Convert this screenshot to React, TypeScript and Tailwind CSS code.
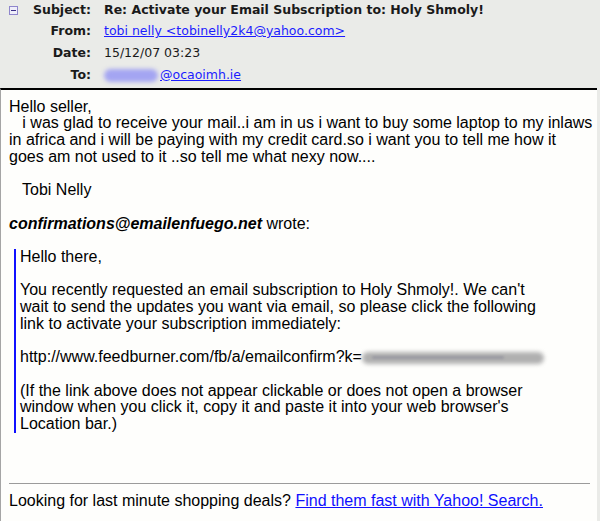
import React from "react";

const headerFont = { fontFamily: '"DejaVu Sans", Verdana, sans-serif' };

function CollapseIcon() {
  return (
    <span className="flex h-[9px] w-[9px] items-center justify-center border border-[#8f86cc] bg-[#efeefa]">
      <span className="block h-px w-[5px] bg-[#3b2f86]" />
    </span>
  );
}

function HeaderRow({ label, children, icon }: { label: string; children: React.ReactNode; icon?: boolean }) {
  return (
    <>
      <div className="flex h-[18px] items-center pl-[9px]">
        {icon && <CollapseIcon />}
        <span className="ml-auto font-bold text-[#1a1a1a]">{label}</span>
      </div>
      <div className="flex h-[18px] items-center whitespace-nowrap">{children}</div>
    </>
  );
}

export default function App() {
  return (
    <div className="flex h-[521px] w-[600px] flex-col overflow-hidden bg-[#eaebe8]">
      {/* message header */}
      <div
        className="grid grid-cols-[91px_1fr] gap-x-[13px] gap-y-[3.7px] pb-[3.7px] pt-[1px] text-[12.5px] text-[#1a1a1a]"
        style={headerFont}
      >
        <HeaderRow label="Subject:" icon>
          <span className="font-bold">Re: Activate your Email Subscription to: Holy Shmoly!</span>
        </HeaderRow>
        <HeaderRow label="From:">
          <a className="text-[#1c1cff] underline">tobi nelly &lt;tobinelly2k4@yahoo.com&gt;</a>
        </HeaderRow>
        <HeaderRow label="Date:">
          <span>15/12/07 03:23</span>
        </HeaderRow>
        <HeaderRow label="To:">
          <span className="inline-block h-[13px] w-[54px] rounded-full bg-[#a4a5f2] blur-[2px]" />
          <a className="ml-[2px] text-[#1c1cff] underline">@ocaoimh.ie</a>
        </HeaderRow>
      </div>

      {/* message body */}
      <div
        className="flex-1 w-[597px] border-l border-t-2 border-l-[#a5a5a5] border-t-black bg-[#fefefc] pl-[8px] pr-[7px] pt-[9px] text-[16px] leading-[16.7px] text-black"
        style={{ fontFamily: '"Liberation Sans", Arial, Helvetica, sans-serif' }}
      >
        <div className="whitespace-pre">
          {"Hello seller,\n   i was glad to receive your mail..i am in us i want to buy some laptop to my inlaws\nin africa and i will be paying with my credit card.so i want you to tell me how it\ngoes am not used to it ..so tell me what nexy now....\n\n   Tobi Nelly\n\n"}
          <b>
            <i>confirmations@emailenfuego.net</i>
          </b>
          {" wrote:\n "}
        </div>

        <blockquote className="ml-[5px] whitespace-pre border-l-2 border-[#1010ff] pl-[4px]">
          {"Hello there,\n\nYou recently requested an email subscription to Holy Shmoly!. We can't\nwait to send the updates you want via email, so please click the following\nlink to activate your subscription immediately:\n\nhttp://www.feedburner.com/fb/a/emailconfirm?k="}
          <span className="relative inline-block h-[13px] w-[182px] align-[-2px]">
            <span className="absolute inset-x-0 top-[1px] h-[12px] rounded-full bg-[#b0b0b0] blur-[2px]" />
            <span className="absolute left-[10px] right-[40px] top-[5px] h-[3px] rounded-full bg-[#9a9aa2] blur-[1px]" />
          </span>
          {"\n\n(If the link above does not appear clickable or does not open a browser\nwindow when you click it, copy it and paste it into your web browser's\nLocation bar.)"}
        </blockquote>

        <div className="h-[50px]" />
        <hr className="border-t border-[#9b9b9b]" />
        <p className="mt-[9px]">
          Looking for last minute shopping deals?{" "}
          <a className="text-[#1010ff] underline">Find them fast with Yahoo! Search.</a>
        </p>
      </div>
    </div>
  );
}
